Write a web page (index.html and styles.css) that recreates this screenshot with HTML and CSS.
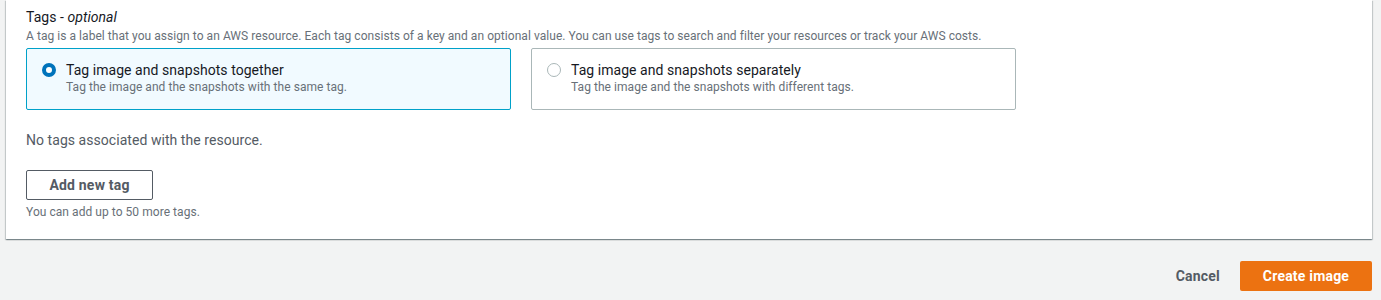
FILE: index.html
```html
<!DOCTYPE html>
<html lang="en">
<head>
<meta charset="utf-8">
<title>Create image - Tags</title>
<link rel="stylesheet" href="styles.css">
</head>
<body>
<div class="page">
  <section class="card">
    <div class="field-label">Tags - <em>optional</em></div>
    <div class="field-desc">A tag is a label that you assign to an AWS resource. Each tag consists of a key and an optional value. You can use tags to search and filter your resources or track your AWS costs.</div>
    <div class="tiles">
      <label class="tile tile-selected">
        <span class="radio radio-checked"></span>
        <span class="tile-text">
          <span class="tile-title">Tag image and snapshots together</span>
          <span class="tile-desc">Tag the image and the snapshots with the same tag.</span>
        </span>
      </label>
      <label class="tile">
        <span class="radio"></span>
        <span class="tile-text">
          <span class="tile-title">Tag image and snapshots separately</span>
          <span class="tile-desc">Tag the image and the snapshots with different tags.</span>
        </span>
      </label>
    </div>
    <p class="empty">No tags associated with the resource.</p>
    <button class="btn-normal" type="button">Add new tag</button>
    <p class="hint">You can add up to 50 more tags.</p>
  </section>
  <div class="actions">
    <button class="btn-link" type="button">Cancel</button>
    <button class="btn-primary" type="button">Create image</button>
  </div>
</div>
</body>
</html>
```

FILE: styles.css
```css
html, body {
  margin: 0;
  padding: 0;
  background: #f2f3f3;
}
body {
  font-family: Roboto, "Noto Sans", Arial, sans-serif;
  color: #16191f;
  font-size: 14px;
  line-height: 22px;
  letter-spacing: 0.05px;
}
.page {
  padding: 0 9px 0 6px;
}
.card {
  background: #fff;
  box-shadow: 0 1px 1px 0 rgba(0, 28, 36, 0.3), 1px 1px 1px 0 rgba(0, 28, 36, 0.15), -1px 1px 1px 0 rgba(0, 28, 36, 0.15);
  padding: 7px 20px 19px 20px;
}
.field-label {
  font-size: 14px;
  line-height: 20px;
  color: #16191f;
}
.field-label em {
  font-style: italic;
}
.field-desc {
  font-size: 12px;
  line-height: 16px;
  color: #687078;
  margin-top: 1px;
}
.tiles {
  display: flex;
  gap: 20px;
  margin-top: 4px;
}
.tile {
  width: 485px;
  height: 62px;
  box-sizing: border-box;
  border: 1px solid #aab7b8;
  border-radius: 2px;
  display: flex;
  align-items: flex-start;
  padding: 12px 16px 0 15px;
  background: #fff;
}
.tile-selected {
  border-color: #00a1c9;
  background: #f1faff;
  padding-left: 15px;
}
.radio {
  width: 14px;
  height: 14px;
  box-sizing: border-box;
  border-radius: 50%;
  border: 1.5px solid #aab7b8;
  background: #fff;
  margin-top: 2px;
  flex: none;
}
.radio-checked {
  border: 4px solid #0073bb;
  background: #fff;
}
.tile-text {
  display: flex;
  flex-direction: column;
  margin-left: 10px;
}
.tile-title {
  font-size: 14px;
  line-height: 18px;
  color: #16191f;
}
.tile-desc {
  font-size: 12px;
  line-height: 16px;
  color: #687078;
}
.empty {
  margin: 19px 0 0 0;
  font-size: 14px;
  line-height: 22px;
  color: #545b64;
}
.btn-normal {
  display: block;
  margin-top: 19px;
  height: 30px;
  width: 127px;
  box-sizing: border-box;
  border: 1px solid #545b64;
  border-radius: 2px;
  background: #fff;
  color: #545b64;
  font-family: inherit;
  font-size: 14px;
  font-weight: 700;
  letter-spacing: 0.2px;
  padding: 0;
}
.hint {
  margin: 4px 0 0 0;
  font-size: 12px;
  line-height: 16px;
  color: #687078;
}
.actions {
  display: flex;
  justify-content: flex-end;
  align-items: center;
  gap: 20px;
  margin-top: 22px;
}
.btn-link {
  border: none;
  background: none;
  color: #545b64;
  font-family: inherit;
  font-size: 14px;
  font-weight: 700;
  letter-spacing: 0.2px;
  padding: 0;
}
.btn-primary {
  height: 30px;
  width: 132px;
  border: none;
  border-radius: 2px;
  background: #ec7211;
  color: #fff;
  font-family: inherit;
  font-size: 14px;
  font-weight: 700;
  letter-spacing: 0.2px;
  padding: 0;
}
```
